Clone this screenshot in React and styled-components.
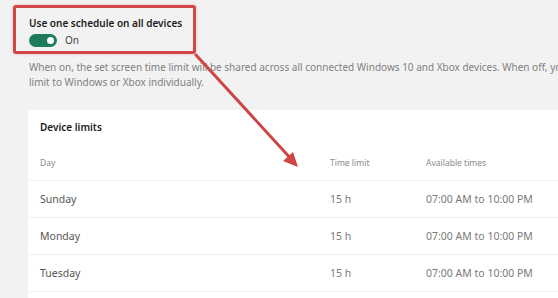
import React from 'react';
import styled, { createGlobalStyle } from 'styled-components';

const GlobalStyle = createGlobalStyle`
  html, body {
    margin: 0;
    padding: 0;
    background: #f2f2f2;
    font-family: "Noto Sans", "Open Sans", sans-serif;
    overflow: hidden;
  }
`;

const Page = styled.div`
  position: relative;
  width: 558px;
  height: 298px;
  padding: 5px 0 0 13px;
  box-sizing: border-box;
  overflow: hidden;
`;

const Highlight = styled.div`
  width: 183px;
  height: 49px;
  box-sizing: border-box;
  border: 3px solid #cf4747;
  border-radius: 3px;
  box-shadow: 0 0 3px rgba(207, 71, 71, 0.35);
  padding: 8px 0 0 13px;
  display: flex;
  flex-direction: column;
  gap: 3px;
`;

const Title = styled.div`
  font-size: 10px;
  font-weight: 600;
  color: #1b1b1b;
  white-space: nowrap;
  line-height: 14px;
`;

const ToggleRow = styled.div`
  display: flex;
  align-items: center;
  gap: 8px;
  font-size: 10px;
  color: #444;
`;

const Switch = styled.div`
  width: 28px;
  height: 13px;
  border-radius: 7px;
  background: ${(p) => (p.on ? '#1e7b5d' : '#888')};
  display: flex;
  align-items: center;
  justify-content: ${(p) => (p.on ? 'flex-end' : 'flex-start')};
  padding: 0 3px;
  box-sizing: border-box;

  &::after {
    content: '';
    width: 7px;
    height: 7px;
    border-radius: 50%;
    background: #fff;
  }
`;

const Description = styled.p`
  margin: 6px 0 0 16px;
  font-size: 10px;
  line-height: 15px;
  color: #808080;
  white-space: nowrap;
`;

const Card = styled.div`
  margin: 20px 0 0 15px;
  background: #fff;
  border-radius: 4px 0 0 0;
  height: 200px;
`;

const CardTitle = styled.div`
  padding: 10px 12px 0;
  height: 34px;
  box-sizing: border-box;
  font-size: 10px;
  font-weight: 600;
  color: #1b1b1b;
`;

const Row = styled.div`
  display: grid;
  grid-template-columns: 290px 96px 1fr;
  align-items: center;
  height: 36px;
  padding: 0 12px;
  border-bottom: 1px solid #efefef;
  font-size: ${(p) => (p.head ? '8.5px' : '10.5px')};
  color: ${(p) => (p.head ? '#8a8a8a' : '#7a7a7a')};
  white-space: nowrap;
`;

const Day = styled.span`
  color: ${(p) => (p.head ? '#8a8a8a' : '#555')};
`;

const Arrow = styled.svg`
  position: absolute;
  left: 0;
  top: 0;
  pointer-events: none;
`;

const days = ['Sunday', 'Monday', 'Tuesday'];

export default function App() {
  return (
    <Page>
      <GlobalStyle />
      <Highlight>
        <Title>Use one schedule on all devices</Title>
        <ToggleRow>
          <Switch on />
          <span>On</span>
        </ToggleRow>
      </Highlight>
      <Description>
        When on, the set screen time limit will be shared across all connected Windows 10 and Xbox devices. When off, you
        <br />
        limit to Windows or Xbox individually.
      </Description>
      <Card>
        <CardTitle>Device limits</CardTitle>
        <Row head>
          <Day head>Day</Day>
          <span>Time limit</span>
          <span>Available times</span>
        </Row>
        {days.map((d) => (
          <Row key={d}>
            <Day>{d}</Day>
            <span>15 h</span>
            <span>07:00 AM to 10:00 PM</span>
          </Row>
        ))}
      </Card>
      <Arrow width="558" height="298" viewBox="0 0 558 298">
        <line x1="196" y1="55" x2="293" y2="161" stroke="#d04444" strokeWidth="3" strokeLinecap="round" />
        <polygon points="298,167 283,161 293,152" fill="#d04444" />
      </Arrow>
    </Page>
  );
}
